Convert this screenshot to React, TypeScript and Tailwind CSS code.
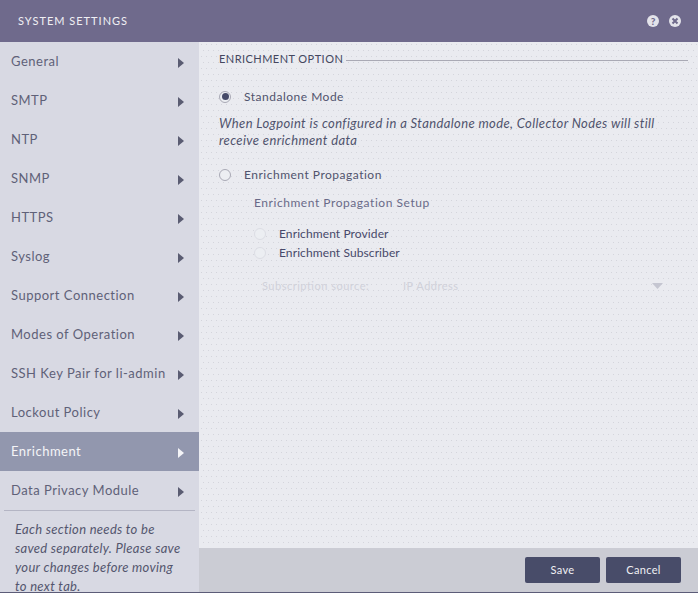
import React from 'react';

const tabs = [
  'General',
  'SMTP',
  'NTP',
  'SNMP',
  'HTTPS',
  'Syslog',
  'Support Connection',
  'Modes of Operation',
  'SSH Key Pair for li-admin',
  'Lockout Policy',
  'Enrichment',
  'Data Privacy Module',
];

const Radio: React.FC<{ checked?: boolean; faded?: boolean }> = ({ checked, faded }) => (
  <span
    className={`flex h-[12px] w-[12px] shrink-0 items-center justify-center rounded-full border bg-[#eceef2] ${
      faded ? 'border-[#dcdde4]' : 'border-[#a9a9b5]'
    }`}
  >
    {checked && <span className="h-[7px] w-[7px] rounded-full bg-[#454a68]" />}
  </span>
);

export default function App() {
  return (
    <div className="flex h-[593px] w-[698px] flex-col overflow-hidden border-b border-[#5c5c78] font-['Lato',sans-serif] text-[13px] tracking-[0.5px] text-[#4b4e6b]">
      {/* Header */}
      <div className="flex h-[42px] shrink-0 items-center justify-between bg-[#6f6a8c] pl-[18px] pr-[17px]">
        <span className="text-[11px] tracking-[1px] text-[#f0f0f4]">SYSTEM SETTINGS</span>
        <div className="flex items-center gap-[10px]">
          <span className="flex h-[12px] w-[12px] items-center justify-center rounded-full bg-[#e3e3ea] text-[10px] font-black leading-none tracking-normal text-[#6f6a8c]">
            ?
          </span>
          <span className="flex h-[12px] w-[12px] items-center justify-center rounded-full bg-[#e3e3ea]">
            <svg width="8" height="8" viewBox="0 0 8 8">
              <path d="M1.5 1.5 L6.5 6.5 M6.5 1.5 L1.5 6.5" stroke="#6f6a8c" strokeWidth="2" />
            </svg>
          </span>
        </div>
      </div>

      <div className="flex min-h-0 flex-1">
        {/* Sidebar */}
        <div className="flex w-[199px] shrink-0 flex-col overflow-hidden bg-[#d8d9e3]">
          {tabs.map((tab) => {
            const active = tab === 'Enrichment';
            return (
              <div
                key={tab}
                className={`flex h-[39px] shrink-0 items-center justify-between pl-[11px] pr-[15px] ${
                  active ? 'bg-[#9297ae] text-[#f4f4f7]' : 'text-[#5f6178]'
                }`}
              >
                <span>{tab}</span>
                <svg width="6" height="10" viewBox="0 0 6 10" className="mt-[2px]">
                  <path d="M0 0 L6 5 L0 10 Z" fill={active ? '#f4f4f7' : '#5a5c72'} />
                </svg>
              </div>
            );
          })}
          <div className="mx-[4px] border-t border-[#b4b5c4] pl-[11px] pr-[14px] pt-[9px] text-[13px] italic leading-[19px] tracking-[0.3px] text-[#54566e]">
            Each section needs to be saved separately. Please save your changes before moving to next tab.
          </div>
        </div>

        {/* Main */}
        <div className="flex min-w-0 flex-1 flex-col">
          <div className="flex-1 bg-[#eaebf0] bg-[radial-gradient(circle_at_2.5px_2.5px,#d4d5dc_0.6px,transparent_0.7px),radial-gradient(circle_at_2.5px_2.5px,#d4d5dc_0.6px,transparent_0.7px)] bg-[length:5px_12px] bg-[position:0_0,2px_6px] pl-[20px] pr-[10px] pt-[9px]">
            <div className="flex items-center gap-[3px]">
              <span className="text-[11px] tracking-[0.45px] text-[#44475f]">ENRICHMENT OPTION</span>
              <div className="mt-[3px] h-px flex-1 bg-[#a9a9b4]" />
            </div>

            <label className="mt-[20px] flex items-center gap-[13px] text-[12px]">
              <Radio checked />
              <span className="text-[#50536d]">Standalone Mode</span>
            </label>
            <p className="mt-[9px] text-[13px] italic leading-[17px] tracking-[0.38px] text-[#50536d]">
              When Logpoint is configured in a Standalone mode, Collector Nodes will still receive enrichment data
            </p>

            <label className="mt-[17px] flex items-center gap-[13px] text-[12px]">
              <Radio />
              <span className="text-[#50536d]">Enrichment Propagation</span>
            </label>

            <div className="pl-[35px]">
              <div className="mt-[10px] text-[12px] tracking-[0.55px] text-[#696a88]">Enrichment Propagation Setup</div>
              <label className="mt-[13px] flex items-center gap-[13px] text-[12px]">
                <Radio faded />
                <span className="tracking-[0.1px] text-[#47496a]">Enrichment Provider</span>
              </label>
              <label className="mt-[1px] flex items-center gap-[13px] text-[12px]">
                <Radio faded />
                <span className="tracking-[0.1px] text-[#47496a]">Enrichment Subscriber</span>
              </label>
              <div className="mt-[16px] flex items-center pl-[8px] pr-[25px] text-[11px] text-[#d0d1da]">
                <span className="w-[141px]">Subscription source:</span>
                <span className="flex-1">IP Address</span>
                <svg width="11" height="6" viewBox="0 0 11 6">
                  <path d="M0 0 L11 0 L5.5 6 Z" fill="#c5c6d1" />
                </svg>
              </div>
            </div>
          </div>

          {/* Footer */}
          <div className="flex h-[44px] shrink-0 items-center justify-end gap-[6px] bg-[#cbccd4] pr-[17px]">
            <button className="h-[26px] w-[75px] rounded-[2px] bg-[#484c69] text-[11px] tracking-[0.3px] text-[#f0f0f4]">Save</button>
            <button className="h-[26px] w-[75px] rounded-[2px] bg-[#484c69] text-[11px] tracking-[0.3px] text-[#f0f0f4]">Cancel</button>
          </div>
        </div>
      </div>
    </div>
  );
}
